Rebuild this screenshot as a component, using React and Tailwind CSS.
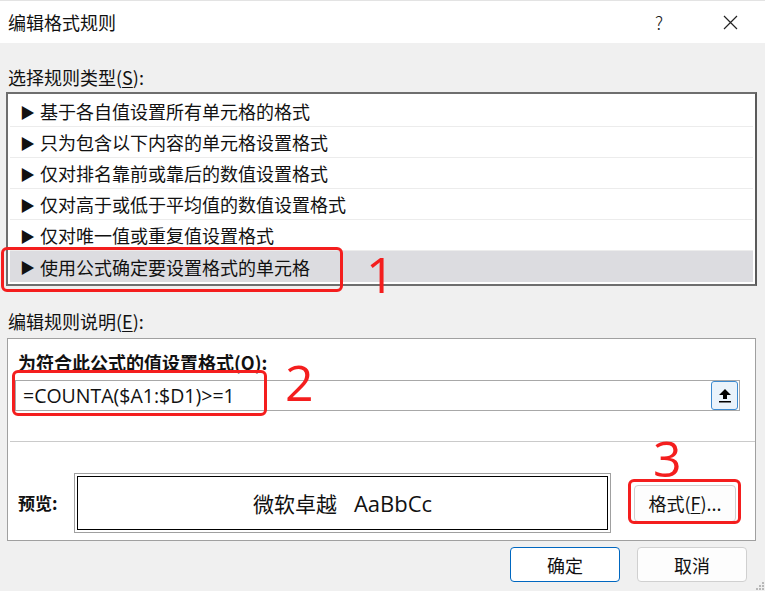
import React from "react";

const rules = [
  "基于各自值设置所有单元格的格式",
  "只为包含以下内容的单元格设置格式",
  "仅对排名靠前或靠后的数值设置格式",
  "仅对高于或低于平均值的数值设置格式",
  "仅对唯一值或重复值设置格式",
  "使用公式确定要设置格式的单元格",
];

const font = { fontFamily: '"Noto Sans CJK SC", "Noto Sans", sans-serif' };
const latin = { fontFamily: '"Open Sans", "Noto Sans", sans-serif' };

function UploadArrow() {
  return (
    <svg width="14" height="16" viewBox="0 0 14 16">
      <path d="M7 1 L13 7 L9 7 L9 11 L5 11 L5 7 L1 7 Z" fill="#000" />
      <rect x="1" y="13" width="12" height="1.5" fill="#000" />
    </svg>
  );
}

export default function App() {
  return (
    <div
      className="relative w-[765px] h-[591px] overflow-hidden bg-[#f0f0f0] text-[#111] flex flex-col"
      style={font}
    >
      {/* title bar */}
      <div className="h-[43px] bg-white flex items-center border-t border-[#e3e3e3]">
        <div className="ml-[8px] text-[18px] leading-[24px]">编辑格式规则</div>
        <div className="ml-auto mr-[60px] text-[18px] leading-[24px] font-light text-[#222]">?</div>
        <svg className="mr-[27px]" width="15" height="15" viewBox="0 0 15 15">
          <path d="M1 1 L14 14 M14 1 L1 14" stroke="#222" strokeWidth="1.2" />
        </svg>
      </div>

      {/* rule type */}
      <div className="mt-[22px] ml-[8px] text-[18px] leading-[24px]">
        选择规则类型(<span className="underline underline-offset-2">S</span>):
      </div>
      <div className="mt-[3px] ml-[6px] w-[751px] h-[194px] border-2 border-[#6e6e6e] border-r-[#5a5a5a] bg-white p-[2px] flex flex-col">
        {rules.map((r, i) => (
          <div
            key={r}
            className={
              i === 5
                ? "h-[31px] flex items-center bg-[#dcdce0]"
                : "h-[31px] flex items-center border-b border-[#ececec]"
            }
          >
            <span className="ml-[10px] w-[14px] text-[15px] leading-none">▶</span>
            <span className="ml-[6px] text-[18px] leading-[24px]">{r}</span>
          </div>
        ))}
      </div>

      {/* rule description */}
      <div className="mt-[23px] ml-[8px] text-[18px] leading-[24px]">
        编辑规则说明(<span className="underline underline-offset-2">E</span>):
      </div>
      <div className="mt-[5px] ml-[7px] w-[749px] h-[203px] border border-[#a0a0a0] bg-white flex flex-col">
        <div className="mt-[12px] ml-[10px] text-[18px] leading-[22px] font-bold">
          为符合此公式的值设置格式(<span className="underline underline-offset-2">O</span>):
        </div>
        <div className="mt-[7px] ml-[7px] w-[725px] h-[31px] border border-[#a8a8a8] flex items-center">
          <span className="ml-[7px] text-[19.5px] leading-[24px]" style={latin}>
            =COUNTA($A1:$D1)&gt;=1
          </span>
          <div className="ml-auto mr-[1px] w-[27px] h-[29px] rounded-[3px] border border-[#3c8ad0] bg-[#eaf3fb] flex items-center justify-center">
            <UploadArrow />
          </div>
        </div>
        <div className="mt-[30px] ml-[2px] w-[745px] h-px bg-[#cacaca]" />
        <div className="mt-[31px] flex items-center">
          <div className="ml-[10px] w-[56px] text-[17px] leading-[22px] font-bold">预览:</div>
          <div className="w-[537px] h-[60px] border border-[#a0a0a0] p-[2px]">
            <div className="w-full h-full border border-black flex items-center justify-center gap-[17px]">
              <span className="text-[21px] leading-[26px]">微软卓越</span>
              <span className="text-[22px] leading-[26px]" style={latin}>AaBbCc</span>
            </div>
          </div>
          <div className="ml-[23px] w-[102px] h-[37px] border border-[#d0d0d0] rounded-[4px] bg-[#fdfdfd] flex items-center justify-center text-[18px] leading-[22px]">
            格式(<span className="underline underline-offset-2">F</span>)...
          </div>
        </div>
      </div>

      {/* buttons */}
      <div className="mt-[6px] flex">
        <div className="ml-[510px] w-[110px] h-[35px] border border-[#0067c0] rounded-[4px] bg-white flex items-center justify-center text-[18px] leading-[24px]">
          确定
        </div>
        <div className="ml-[17px] w-[110px] h-[35px] border border-[#d0d0d0] rounded-[4px] bg-[#fdfdfd] flex items-center justify-center text-[18px] leading-[24px]">
          取消
        </div>
      </div>

      {/* resize grip */}
      <svg className="absolute right-[1px] bottom-[1px]" width="8" height="8" viewBox="0 0 8 8">
        <rect x="6" y="0" width="2" height="2" fill="#b8b8b8" />
        <rect x="3" y="3" width="2" height="2" fill="#b8b8b8" />
        <rect x="6" y="3" width="2" height="2" fill="#b8b8b8" />
        <rect x="0" y="6" width="2" height="2" fill="#b8b8b8" />
        <rect x="3" y="6" width="2" height="2" fill="#b8b8b8" />
        <rect x="6" y="6" width="2" height="2" fill="#b8b8b8" />
      </svg>

      {/* annotations */}
      <div className="absolute left-[1px] top-[247px] w-[342px] h-[45px] border-[3px] border-[#f41e1e] rounded-[6px]" />
      <div className="absolute left-[366px] top-[244px] text-[50px] leading-[60px] text-[#f41e1e]" style={latin}>
        1
      </div>
      <div className="absolute left-[12px] top-[370px] w-[255px] h-[46px] border-[3px] border-[#f41e1e] rounded-[6px]" />
      <div className="absolute left-[285px] top-[352px] text-[50px] leading-[60px] text-[#f41e1e]" style={latin}>
        2
      </div>
      <div className="absolute left-[628px] top-[479px] w-[113px] h-[45px] border-[3px] border-[#f41e1e] rounded-[6px]" />
      <div className="absolute left-[653px] top-[428px] text-[50px] leading-[60px] text-[#f41e1e]" style={latin}>
        3
      </div>
    </div>
  );
}
